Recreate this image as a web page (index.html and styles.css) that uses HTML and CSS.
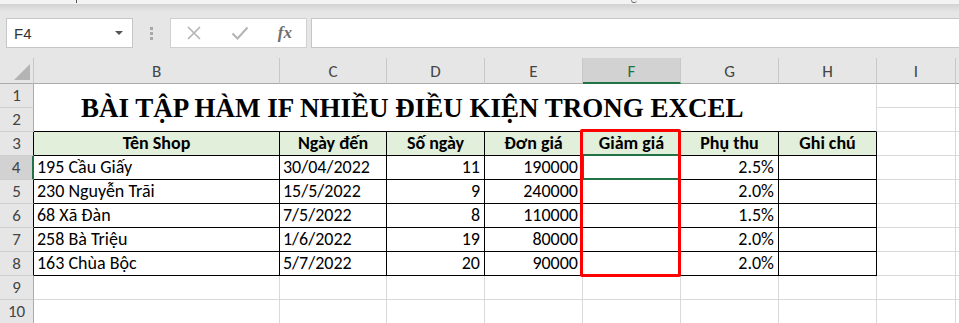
FILE: index.html
```html
<!DOCTYPE html>
<html>
<head>
<meta charset="utf-8">
<link rel="stylesheet" href="styles.css">
</head>
<body>
<div class="app">
  <div class="ribbon-edge"><span class="m1"></span><span class="m2"></span></div>
  <div class="toolbar">
    <div class="namebox"><span class="ref">F4</span><span class="caret"></span></div>
    <div class="grip"><i></i><i></i><i></i></div>
    <div class="fxbtns">
      <svg class="ico" width="16" height="16" viewBox="0 0 16 16"><path d="M2 2 L14 14 M14 2 L2 14" stroke="#b3b3b3" stroke-width="1.6" fill="none"/></svg>
      <svg class="ico" width="18" height="16" viewBox="0 0 18 16"><path d="M1.5 8.5 L6.5 13.5 L16.5 2.5" stroke="#b3b3b3" stroke-width="2" fill="none"/></svg>
      <span class="fx">fx</span>
    </div>
    <div class="formula"></div>
  </div>
  <div class="sheet">
    <div class="c hd corner"><span class="tri"></span></div>
    <div class="c hd">B</div>
    <div class="c hd">C</div>
    <div class="c hd">D</div>
    <div class="c hd">E</div>
    <div class="c hd sel">F</div>
    <div class="c hd">G</div>
    <div class="c hd">H</div>
    <div class="c hd">I</div>
    <div class="c hd last"></div>

    <div class="c rh">1</div>
    <div class="c title">BÀI TẬP HÀM IF NHIỀU ĐIỀU KIỆN TRONG EXCEL</div>
    <div class="c"></div><div class="c last"></div>
    <div class="c rh">2</div>
    <div class="c"></div><div class="c last"></div>

    <div class="c rh tb">3</div>
    <div class="c t th">Tên Shop</div>
    <div class="c t th">Ngày đến</div>
    <div class="c t th">Số ngày</div>
    <div class="c t th">Đơn giá</div>
    <div class="c t th">Giảm giá</div>
    <div class="c t th">Phụ thu</div>
    <div class="c t th">Ghi chú</div>
    <div class="c"></div><div class="c last"></div>

    <div class="c rh tb rsel">4</div>
    <div class="c t">195 Cầu Giấy</div>
    <div class="c t">30/04/2022</div>
    <div class="c t num">11</div>
    <div class="c t num">190000</div>
    <div class="c t"></div>
    <div class="c t num">2.5%</div>
    <div class="c t"></div>
    <div class="c"></div><div class="c last"></div>

    <div class="c rh tb">5</div>
    <div class="c t">230 Nguyễn Trãi</div>
    <div class="c t">15/5/2022</div>
    <div class="c t num">9</div>
    <div class="c t num">240000</div>
    <div class="c t"></div>
    <div class="c t num">2.0%</div>
    <div class="c t"></div>
    <div class="c"></div><div class="c last"></div>

    <div class="c rh tb">6</div>
    <div class="c t">68 Xã Đàn</div>
    <div class="c t">7/5/2022</div>
    <div class="c t num">8</div>
    <div class="c t num">110000</div>
    <div class="c t"></div>
    <div class="c t num">1.5%</div>
    <div class="c t"></div>
    <div class="c"></div><div class="c last"></div>

    <div class="c rh tb">7</div>
    <div class="c t">258 Bà Triệu</div>
    <div class="c t">1/6/2022</div>
    <div class="c t num">19</div>
    <div class="c t num">80000</div>
    <div class="c t"></div>
    <div class="c t num">2.0%</div>
    <div class="c t"></div>
    <div class="c"></div><div class="c last"></div>

    <div class="c rh tb">8</div>
    <div class="c t">163 Chùa Bộc</div>
    <div class="c t">5/7/2022</div>
    <div class="c t num">20</div>
    <div class="c t num">90000</div>
    <div class="c t"></div>
    <div class="c t num">2.0%</div>
    <div class="c t"></div>
    <div class="c"></div><div class="c last"></div>

    <div class="c rh">9</div>
    <div class="c"></div><div class="c"></div><div class="c"></div><div class="c"></div><div class="c"></div><div class="c"></div><div class="c"></div><div class="c"></div><div class="c last"></div>

    <div class="c rh">10</div>
    <div class="c"></div><div class="c"></div><div class="c"></div><div class="c"></div><div class="c"></div><div class="c"></div><div class="c"></div><div class="c"></div><div class="c last"></div>

    <div class="selbox"></div>
    <div class="redbox"></div>
  </div>
</div>
</body>
</html>
```

FILE: styles.css
```css
html, body {
  margin: 0;
  padding: 0;
  background: #ffffff;
}
.app {
  width: 959px;
  height: 323px;
  overflow: hidden;
  font-family: "Carlito", "Lato", "Liberation Sans", sans-serif;
  color: #000;
}
.ribbon-edge {
  height: 4px;
  background: #f3f3f3;
  position: relative;
  overflow: hidden;
}
.ribbon-edge .m1 {
  position: absolute;
  left: 76px;
  top: 0;
  width: 1px;
  height: 3px;
  background: #555;
}
.ribbon-edge .m2 {
  position: absolute;
  left: 631px;
  top: 0;
  width: 5px;
  height: 2px;
  border-bottom: 1px solid #666;
  border-left: 1px solid #888;
  border-radius: 0 0 3px 3px;
}
.toolbar {
  height: 54px;
  box-sizing: border-box;
  background: linear-gradient(#d2d2d2 0, #e6e6e6 8px, #e6e6e6 100%);
  display: flex;
  align-items: flex-start;
  padding-top: 14px;
}
.namebox {
  margin-left: 6px;
  width: 127px;
  height: 30px;
  box-sizing: border-box;
  background: #fff;
  border: 1px solid #c6c6c6;
  display: flex;
  align-items: center;
  justify-content: space-between;
  padding: 0 9px 0 7px;
}
.ref {
  font-family: "Liberation Sans", sans-serif;
  font-size: 15px;
  color: #333;
}
.caret {
  width: 0;
  height: 0;
  border-left: 4px solid transparent;
  border-right: 4px solid transparent;
  border-top: 4px solid #555;
}
.grip {
  width: 37px;
  height: 30px;
  display: flex;
  flex-direction: column;
  align-items: center;
  justify-content: center;
  gap: 2px;
}
.grip i {
  width: 3px;
  height: 3px;
  background: #a8a8a8;
  display: block;
}
.fxbtns {
  width: 137px;
  height: 30px;
  box-sizing: border-box;
  background: #fff;
  border: 1px solid #d0d0d0;
  display: flex;
  align-items: center;
  padding: 0 14px 0 15px;
  justify-content: space-between;
}
.fx {
  font-family: "Liberation Serif", serif;
  font-style: italic;
  font-weight: bold;
  font-size: 17px;
  color: #6f6f6f;
}
.formula {
  margin-left: 4px;
  flex: 1;
  height: 30px;
  box-sizing: border-box;
  background: #fff;
  border: 1px solid #c6c6c6;
  border-right: none;
}
.sheet {
  position: relative;
  display: grid;
  grid-template-columns: 34px 246px 107px 98px 98px 98px 98px 98px 79px 1fr;
  grid-template-rows: 26px repeat(10, 24px);
  background: #fff;
}
.c {
  box-sizing: border-box;
  border-right: 1px solid #d9d9d9;
  border-bottom: 1px solid #d9d9d9;
  font-size: 18px;
  line-height: 23px;
  padding: 0 3px;
  white-space: nowrap;
  overflow: hidden;
  display: flex;
  align-items: flex-end;
}
.c.last {
  border-right: none;
}
.hd {
  background: #e6e6e6;
  border-right-color: #c8c8c8;
  border-bottom-color: #ababab;
  color: #444;
  justify-content: center;
  align-items: center;
  font-size: 17px;
  padding-top: 2px;
}
.hd.sel {
  background: #d2d2d2;
  color: #217346;
  border-bottom: 2px solid #217346;
}
.corner {
  position: relative;
}
.tri {
  position: absolute;
  right: 3px;
  bottom: 3px;
  width: 16px;
  height: 16px;
  background: #b4b4b4;
  clip-path: polygon(100% 0, 100% 100%, 0 100%);
}
.rh {
  background: #e6e6e6;
  border-right-color: #ababab;
  border-bottom-color: #cfcfcf;
  color: #444;
  justify-content: center;
  font-size: 17px;
}
.rh.tb {
  border-right-color: #000;
}
.rh.rsel {
  background: #d2d2d2;
  border-right: 2px solid #217346;
}
.title {
  grid-column: 2 / 9;
  grid-row: 2 / 4;
  border-bottom-color: #000;
  font-family: "Liberation Serif", serif;
  font-weight: bold;
  font-size: 27px;
  align-items: center;
  padding-left: 47px;
  padding-top: 2px;
}
.t {
  border-right-color: #000;
  border-bottom-color: #000;
}
.th {
  background: #e2efda;
  font-weight: bold;
  justify-content: center;
}
.num {
  justify-content: flex-end;
  padding-right: 4px;
}
.selbox {
  position: absolute;
  left: 582px;
  top: 96px;
  width: 98px;
  height: 26px;
  box-sizing: border-box;
  border: 2px solid #217346;
}
.redbox {
  position: absolute;
  left: 580px;
  top: 71px;
  width: 101px;
  height: 148px;
  box-sizing: border-box;
  border: 3px solid #ff0000;
  border-radius: 2px;
}
```
